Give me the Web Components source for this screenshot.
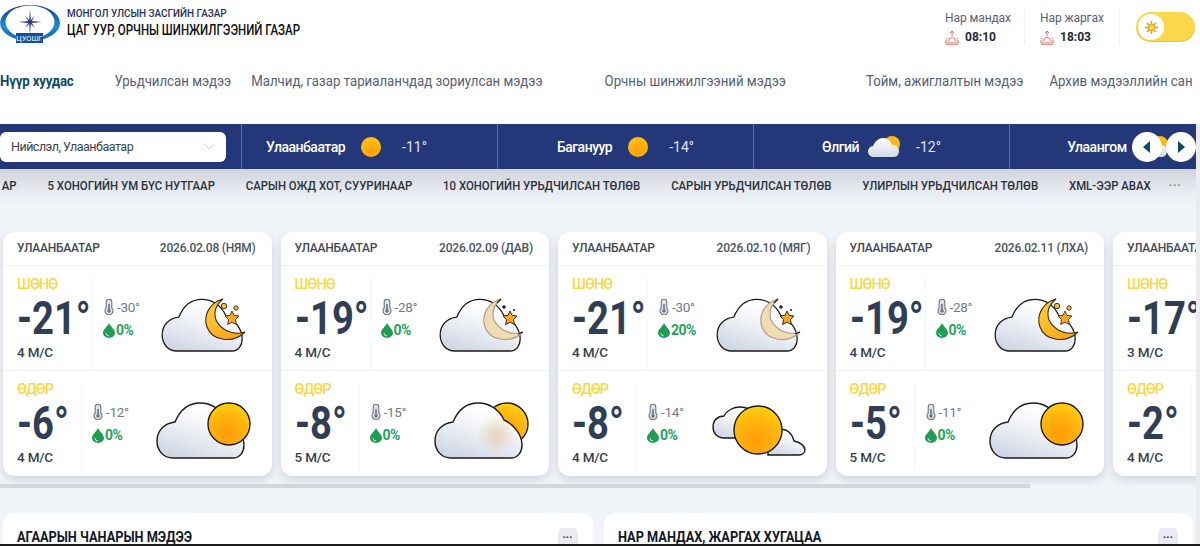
<!DOCTYPE html>
<html lang="mn">
<head>
<meta charset="utf-8">
<title>Цаг уур</title>
<style>
  html, body { margin: 0; height: 546px; overflow: hidden; background: #fff; }
  body { font-family: Roboto, "Liberation Sans", sans-serif; }
  wx-nav a { text-decoration: none; color: inherit; }
</style>
</head>
<body>
<wx-page>
  <wx-header></wx-header>
  <wx-nav>
    <a class="on">Нүүр хуудас</a>
    <a style="margin-left:43.400px">Урьдчилсан мэдээ</a>
    <a style="margin-left:21.200px">Малчид, газар тариаланчдад зориулсан мэдээ</a>
    <a style="margin-left:65.600px">Орчны шинжилгээний мэдээ</a>
    <a style="margin-left:84.700px">Тойм, ажиглалтын мэдээ</a>
    <a style="margin-left:27.500px">Архив мэдээллийн сан</a>
  </wx-nav>
  <wx-city-bar>
    <wx-city name="Улаанбаатар" temp="-11°" icon="sun" style="padding-right:46px"></wx-city>
    <wx-city name="Багануур" temp="-14°" icon="sun"></wx-city>
    <wx-city name="Өлгий" temp="-12°" icon="cloud"></wx-city>
    <wx-city name="Улаангом" temp="" icon="cloud"></wx-city>
  </wx-city-bar>
  <wx-subnav>
    <span>АР</span>
    <span>5 ХОНОГИЙН УМ БҮС НУТГААР</span>
    <span>САРЫН ОЖД ХОТ, СУУРИНААР</span>
    <span>10 ХОНОГИЙН УРЬДЧИЛСАН ТӨЛӨВ</span>
    <span>САРЫН УРЬДЧИЛСАН ТӨЛӨВ</span>
    <span>УЛИРЛЫН УРЬДЧИЛСАН ТӨЛӨВ</span>
    <span>XML-ЭЭР АВАХ</span>
  </wx-subnav>
  <wx-cards>
    <wx-day-card date="2026.02.08 (НЯМ)" n="-21°|-30°|0%|4 М/С|moon" d="-6°|-12°|0%|4 М/С|front"></wx-day-card>
    <wx-day-card date="2026.02.09 (ДАВ)" n="-19°|-28°|0%|4 М/С|moonfaint" d="-8°|-15°|0%|5 М/С|behind"></wx-day-card>
    <wx-day-card date="2026.02.10 (МЯГ)" n="-21°|-30°|20%|4 М/С|moonfaint" d="-8°|-14°|0%|4 М/С|big"></wx-day-card>
    <wx-day-card date="2026.02.11 (ЛХА)" n="-19°|-28°|0%|4 М/С|moon" d="-5°|-11°|0%|5 М/С|front"></wx-day-card>
    <wx-day-card n="-17°|||3 М/С|" d="-2°|||4 М/С|"></wx-day-card>
  </wx-cards>
  <wx-panels>
    <wx-panel>АГААРЫН ЧАНАРЫН МЭДЭЭ</wx-panel>
    <wx-panel>НАР МАНДАХ, ЖАРГАХ ХУГАЦАА</wx-panel>
  </wx-panels>
</wx-page>

<script>
// small helper so every element does the same thing
function shadow(el, html) {
  el.attachShadow({ mode: 'open' });
  el.shadowRoot.innerHTML = html;
}

const sunriseIcon = `
  <svg width="14" height="15" viewBox="0 0 14 15" fill="none" stroke="#d8706c" stroke-width="1">
    <path d="M7 6V1M5 3l2-2 2 2"/>
    <path d="M3.500 11a3.500 3.500 0 0 1 7 0"/>
    <path d="M1 8l1.500 1M13 8l-1.500 1M0 11h2.500M11.500 11H14"/>
    <path d="M0 12.800h14M1 14.400h12" stroke-width=".9"/>
  </svg>`;

class WxPage extends HTMLElement {
  constructor() {
    super();
    shadow(this, `
      <style>
        :host { display: block; position: relative; width: 1200px; height: 546px; overflow: hidden; background: #fff; }
        #main { width: 1196px; height: 546px; overflow: hidden; background: #fff; }
        #rail { position: absolute; right: 0; top: 124px; bottom: 0; width: 4px; background: #e9ebee; }
        #line { position: absolute; left: 0; right: 0; bottom: 0; height: 2px; background: #1c1c1c; }
      </style>
      <div id="main"><slot></slot></div>
      <div id="rail"></div>
      <div id="line"></div>
    `);
  }
}

class WxHeader extends HTMLElement {
  constructor() {
    super();
    shadow(this, `
      <style>
        :host { display: flex; height: 54px; width: 1200px; align-items: flex-start; box-sizing: border-box; color: #111; }
        #logo { width: 62px; height: 44px; margin-top: 2px; flex: none; }
        #titles { margin: 6px 0 0 5px; width: 300px; flex: none; }
        #titles div { transform-origin: 0 50%; white-space: nowrap; }
        #t1 { font-size: 11.500px; font-weight: 500; line-height: 14px; color: #27305c; transform: scaleX(.863); }
        #t2 { font-size: 14px; font-weight: 500; line-height: 18px; margin-top: 1px; color: #0d0d12; transform: scaleX(.82); }
        #right { margin-left: auto; display: flex; margin-top: 8px; margin-right: 5px; align-items: flex-start; }
        .sun { width: 80px; height: 37px; border-right: 1px solid #f0f1f3; box-sizing: border-box; }
        .sun + .sun { width: 95px; padding-left: 15px; }
        .lbl { font-size: 12px; line-height: 18px; color: #59626f; margin-top: 1px; letter-spacing: -.1px; }
        .val { display: flex; gap: 6px; align-items: center; font-size: 12px; font-weight: 700; color: #222a35; margin-top: 2px; height: 16px; }
        #toggle { width: 59px; height: 30px; margin: 4px 0 0 16px; border-radius: 15px; background: #fbd84b; position: relative; box-shadow: inset 0 -1px 1px #e5c02f; }
        #knob { position: absolute; left: 2px; top: 2px; width: 26px; height: 26px; border-radius: 50%; background: #fff; display: flex; align-items: center; justify-content: center; }
      </style>
      <svg id="logo" viewBox="0 0 62 44">
        <defs>
          <linearGradient id="lg" x1="0" y1="0" x2="0" y2="1">
            <stop offset="0" stop-color="#123a8c"/><stop offset=".6" stop-color="#1b8fd6"/><stop offset="1" stop-color="#0f5fb0"/>
          </linearGradient>
        </defs>
        <ellipse cx="30" cy="21" rx="30" ry="18" fill="url(#lg)"/>
        <ellipse cx="30" cy="20" rx="24.500" ry="16.500" fill="#fff"/>
        <path d="M30 7l.8 11 4-4-3 5 10 1-10 1 3 5-4-4-.8 11-.8-11-4 4 3-5-10-1 10-1-3-5 4 4z" fill="#2c3f8f"/>
        <rect x="16" y="31" width="27" height="10" fill="#134f9e"/>
        <text x="29.500" y="39" text-anchor="middle" font-size="7.500" font-family="Roboto" fill="#fff">ЦУОШГ</text>
      </svg>
      <div id="titles">
        <div id="t1">МОНГОЛ УЛСЫН ЗАСГИЙН ГАЗАР</div>
        <div id="t2">ЦАГ УУР, ОРЧНЫ ШИНЖИЛГЭЭНИЙ ГАЗАР</div>
      </div>
      <div id="right">
        <div class="sun"><div class="lbl">Нар мандах</div><div class="val">${sunriseIcon}08:10</div></div>
        <div class="sun"><div class="lbl">Нар жаргах</div><div class="val">${sunriseIcon}18:03</div></div>
        <div id="toggle"><div id="knob">
          <svg width="13" height="13" viewBox="0 0 13 13"><g stroke="#e2a10f" stroke-width="1.500"><path d="M6.500 0v13M0 6.500h13M2 2l9 9M11 2l-9 9"/></g><circle cx="6.500" cy="6.500" r="4" fill="#f0b31a"/><circle cx="6.500" cy="6.500" r="2" fill="#fde38a"/></svg>
        </div></div>
      </div>
    `);
  }
}

class WxNav extends HTMLElement {
  constructor() {
    super();
    shadow(this, `
      <style>
        :host { display: block; height: 70px; font-size: 14px; color: #556070; overflow: hidden; }
        #row { display: flex; padding-top: 18px; line-height: 18px; white-space: nowrap; width: 1270px; transform: scaleX(.945); transform-origin: 0 0; }
        ::slotted(.on) { color: #0f4a68 !important; font-weight: 700; letter-spacing: -.2px; }
      </style>
      <div id="row"><slot></slot></div>
    `);
  }
}

class WxCityBar extends HTMLElement {
  constructor() {
    super();
    shadow(this, `
      <style>
        :host { display: flex; position: relative; width: 1196px; height: 45px; background: #243879; overflow: hidden; }
        #pick { flex: none; width: 241px; display: flex; align-items: center; }
        #select { width: 226px; height: 30px; background: #fff; border-radius: 6px; display: flex; align-items: center; justify-content: space-between; box-sizing: border-box; padding: 0 11px; font-size: 12.500px; color: #3a4450; letter-spacing: -.5px; }
        #cells { display: flex; }
        .arrow { position: absolute; top: 8px; width: 30px; height: 30px; border-radius: 50%; background: #fff; display: flex; align-items: center; justify-content: center; }
      </style>
      <div id="pick"><div id="select">Нийслэл, Улаанбаатар
        <svg width="12" height="7" viewBox="0 0 12 7" fill="none" stroke="#cfd3da"><path d="M1 1l5 5 5-5"/></svg>
      </div></div>
      <div id="cells"><slot></slot></div>
      <div class="arrow" style="left:1132px"><svg width="10" height="12" viewBox="0 0 10 12"><path d="M8 0v12L1 6z" fill="#0e4a62"/></svg></div>
      <div class="arrow" style="left:1166px"><svg width="10" height="12" viewBox="0 0 10 12"><path d="M2 0v12l7-6z" fill="#0e4a62"/></svg></div>
    `);
  }
}

class WxCity extends HTMLElement {
  constructor() {
    super();
    const icon = this.getAttribute('icon') === 'sun'
      ? `<svg width="20" height="20" viewBox="0 0 20 20"><defs><radialGradient id="s" cx=".5" cy=".7" r=".7"><stop offset="0" stop-color="#ff9d0a"/><stop offset="1" stop-color="#fdc50f"/></radialGradient></defs><circle cx="10" cy="10" r="10" fill="url(#s)"/></svg>`
      : `<svg width="34" height="22" viewBox="0 0 34 22"><circle cx="24" cy="8" r="8" fill="#fbb91a"/><path d="M6 21a5.500 5.500 0 0 1-1-11C7 5 11 2 15 2c4 0 7 2 9 7 5 0 7 3 7 6 0 3-2 6-5 6z" fill="url(#c)"/><defs><linearGradient id="c" x1="0" y1="0" x2="0" y2="1"><stop offset="0" stop-color="#fff"/><stop offset="1" stop-color="#d3d9e6"/></linearGradient></defs></svg>`;
    shadow(this, `
      <style>
        :host { display: flex; flex: none; width: 256px; height: 45px; align-items: center; justify-content: center; border-left: 1px solid #5a6ca3; box-sizing: border-box; color: #fff; font-size: 14px; font-weight: 500; }
        #n { margin-right: 9px; letter-spacing: -.5px; }
        #i { width: 34px; margin-right: 14px; display: flex; justify-content: center; }
        #t { color: #dfe4f1; font-weight: 400; min-width: 24px; }
      </style>
      <span id="n">${this.getAttribute('name')}</span>
      <span id="i">${icon}</span>
      <span id="t">${this.getAttribute('temp')}</span>
    `);
  }
}

class WxSubnav extends HTMLElement {
  constructor() {
    super();
    shadow(this, `
      <style>
        :host { display: block; width: 1196px; height: 63px; box-sizing: border-box; background: linear-gradient(#cfd2da 0, #e6e9ef 20px, #f1f4f9 36px); font-size: 12.500px; font-weight: 500; color: #2a323d; overflow: hidden; }
        #row { display: flex; gap: 33.900px; padding: 9px 0 0 2px; line-height: 16px; white-space: nowrap; align-items: center; width: 1300px; transform: scaleX(.911); transform-origin: 0 0; }
        #more { color: #69727e; margin-left: -14px; letter-spacing: 1px; }
      </style>
      <div id="row"><slot></slot><span id="more">···</span></div>
    `);
  }
}

class WxCards extends HTMLElement {
  constructor() {
    super();
    shadow(this, `
      <style>
        :host { display: block; width: 1196px; height: 281px; background: #f1f4f9; overflow: hidden; position: relative; }
        #row { display: flex; gap: 9px; padding-left: 3px; }
        #track { position: absolute; left: 0; top: 252px; height: 4px; width: 1196px; }
        #thumb { width: 1030px; height: 4px; background: #d3d6da; }
      </style>
      <div id="row"><slot></slot></div>
      <div id="track"><div id="thumb"></div></div>
    `);
  }
}

// draws one weather picture; coordinates follow the reference crops
class WxIcon extends HTMLElement {
  constructor() {
    super();
    const kind = this.getAttribute('kind');
    const id = 'k' + kind;
    const cloud = 'M20 58C10 58 4 50 4 41 4 30 12 23 22 22 27 10 36 3 47 3 58 3 68 9 73 20 82 24 91 34 91 45 91 52 87 58 80 58Z';
    const crescent = 'M70 5C56 9 50 22 54 33 59 47 80 50 92 38 80 42 68 36 63 26 60 17 64 10 70 5Z';
    const defs = `<defs>
      <linearGradient id="${id}c" x1=".1" y1="1" x2=".55" y2=".1"><stop offset="0" stop-color="#cbd3e2"/><stop offset=".75" stop-color="#f6f7fa"/><stop offset="1" stop-color="#fff"/></linearGradient>
      <radialGradient id="${id}s" cx=".45" cy=".72" r=".75"><stop offset="0" stop-color="#ff9a0b"/><stop offset=".6" stop-color="#ffb60d"/><stop offset="1" stop-color="#ffd30f"/></radialGradient>
      <linearGradient id="${id}m" x1="0" y1="0" x2=".8" y2="1"><stop offset="0" stop-color="#ffd23a"/><stop offset="1" stop-color="#f9a21b"/></linearGradient>
      <radialGradient id="${id}g"><stop offset="0" stop-color="#d9a45f" stop-opacity=".4"/><stop offset="1" stop-color="#d9a45f" stop-opacity="0"/></radialGradient>
    </defs>`;
    const ink = 'stroke="#1d1a16" stroke-width="1.400"';
    const nightCloud = `<path transform="translate(5.500 2.500) scale(.92 .94)" d="${cloud}" fill="url(#${id}c)" ${ink}/>`;
    const star = (fill, s) => `<path d="M79 17l2 4.300 5 .7-3.500 3.500 .8 5-4.300-2.400-4.300 2.400 .8-5L72 22l5-.7z" fill="${fill}" stroke="${s}" stroke-width="1"/>`;
    let art = '';
    if (kind === 'moon') {
      art = nightCloud + `
        <circle cx="71" cy="12" r="2.700" fill="#f7c04a" stroke="#4a3410"/><circle cx="83" cy="14" r="2.200" fill="#f7c04a" stroke="#4a3410"/>
        ${star('#f9a825', '#5a3d10')}
        <path d="${crescent}" fill="url(#${id}m)" stroke="#3a2a10" stroke-width="1.100"/>`;
    } else if (kind === 'moonfaint') {
      art = nightCloud + `
        <circle cx="73" cy="13" r="1.800" fill="#222"/><circle cx="83" cy="16" r="1.100" fill="#222"/>
        ${star('#f9a825', '#3a2a10')}
        <path d="${crescent}" fill="#efdcb4" stroke="#ab9c80" stroke-width="1.100"/>
        <path d="M70 5l-4 4M92 38l-5 2" stroke="#1d1a16" stroke-width="1.200"/>`;
    } else if (kind === 'front') {
      art = `<path d="${cloud}" fill="url(#${id}c)" ${ink}/><circle cx="76" cy="24" r="21" fill="url(#${id}s)" ${ink}/>`;
    } else if (kind === 'behind') {
      art = `<circle cx="76" cy="24" r="21" fill="url(#${id}s)" ${ink}/><path d="${cloud}" fill="url(#${id}c)" ${ink}/><ellipse cx="66" cy="34" rx="20" ry="20" fill="url(#${id}g)"/>`;
    } else if (kind === 'big') {
      art = `<path d="M16 38C9 38 5 33 5 27 5 20 10 16 16 16 19 10 26 7 32 7 40 7 46 12 48 18V38Z" fill="url(#${id}c)" ${ink}/>
        <path d="M60 55V30H72C78 28 84 33 86 41 92 42 97 46 97 50 97 53 94 55 90 55Z" fill="url(#${id}c)" ${ink}/>
        <circle cx="50" cy="30" r="24" fill="url(#${id}s)" ${ink}/>`;
    }
    shadow(this, `
      <style>:host { display: block; width: 100px; height: 64px; } svg { display: block; overflow: visible; }</style>
      <svg width="100" height="64" viewBox="0 0 100 64">${defs}${art}</svg>
    `);
  }
}

const thermo = `<svg width="10" height="16" viewBox="0 0 10 16" fill="none"><path d="M2.200 3a2.800 2.800 0 0 1 5.600 0v6a4 4 0 1 1-5.600 0z" fill="#dfe2e8" stroke="#6f7783" stroke-width="1.100"/><path d="M5 5v6" stroke="#6f7783" stroke-width="1.600"/><circle cx="5" cy="12" r="1.800" fill="#6f7783"/></svg>`;
const drop = `<svg width="12" height="15" viewBox="0 0 12 15"><path d="M6 0C4 4 0 6.500 0 10a6 5 0 0 0 12 0C12 6.500 8 4 6 0z" fill="#1f9d55"/><path d="M3 10a3 3 0 0 0 3 3" fill="none" stroke="#cfeedd" stroke-width="1"/></svg>`;

class WxDayCard extends HTMLElement {
  constructor() {
    super();
    const part = (label, attr) => {
      const [temp, low, rain, wind, kind] = this.getAttribute(attr).split('|');
      const details = low ? `<div class="det">
            <div class="low">${thermo}<span>${low}</span></div>
            <div class="rain">${drop}<span>${rain}</span></div>
          </div>` : '';
      const icon = kind ? `<wx-icon class="ic" kind="${kind}"></wx-icon>` : '';
      // the column is narrower for one digit temperatures
      const w = temp.length > 3 ? 76 : 65;
      return `<section>
        <div class="main" style="width:${w}px">
          <div class="lab">${label}</div>
          <div class="temp">${temp}</div>
          <div class="wind">${wind}</div>
        </div>
        ${details}${icon}
      </section>`;
    };
    const date = this.getAttribute('date');
    shadow(this, `
      <style>
        :host { display: block; flex: none; width: 268.500px; height: 244px; background: #fff; border-radius: 12px; box-shadow: 0 4px 10px rgba(60,70,90,.18); overflow: hidden; color: #313f56; }
        header { height: 34px; display: flex; justify-content: space-between; align-items: center; padding: 0 16px 2px 14px; font-size: 12px; font-weight: 500; color: #3f4958; border-bottom: 1px solid #f0f1f4; box-sizing: border-box; white-space: nowrap; letter-spacing: -.25px; }
        header span + span { color: #4a5462; letter-spacing: -.2px; }
        section { height: 105px; position: relative; display: flex; padding-left: 14px; box-sizing: border-box; border-bottom: 1px solid #eff0f3; }
        section:last-child { border-bottom: 0; }
        .main { border-right: 1px solid #f6f7f9; flex: none; box-sizing: border-box; height: 92px; margin-top: 11px; white-space: nowrap; }
        .lab { font-size: 14.500px; font-weight: 500; color: #fbd748; line-height: 16px; letter-spacing: -.9px; }
        .temp { font-size: 46px; font-weight: 700; line-height: 44px; margin-top: 3px; color: #303e55; transform: scaleX(.83); transform-origin: 0 50%; }
        .wind { font-size: 13.500px; font-weight: 500; line-height: 16px; margin-top: 4px; color: #353f4e; letter-spacing: -.2px; }
        .det { margin: 33px 0 0 11px; flex: none; }
        .low { display: flex; align-items: center; gap: 3px; font-size: 13.500px; line-height: 16px; color: #737b87; letter-spacing: -.3px; }
        .rain { display: flex; align-items: center; gap: 1px; font-size: 14px; font-weight: 700; line-height: 16px; color: #23a35c; margin-top: 7px; margin-left: -1px; letter-spacing: -.5px; }
        .ic { position: absolute; left: 150px; top: 28px; }
        section:last-child .ic { top: 29px; }
      </style>
      <header><span>УЛААНБААТАР</span>${date ? `<span>${date}</span>` : ''}</header>
      ${part('ШӨНӨ', 'n')}
      ${part('ӨДӨР', 'd')}
    `);
  }
}

class WxPanels extends HTMLElement {
  constructor() {
    super();
    shadow(this, `
      <style>
        :host { display: flex; gap: 11px; width: 1196px; height: 33px; background: #f1f4f9; padding-left: 3px; box-sizing: border-box; overflow: hidden; }
      </style>
      <slot></slot>
    `);
  }
}

class WxPanel extends HTMLElement {
  constructor() {
    super();
    shadow(this, `
      <style>
        :host { display: flex; flex: none; width: 589.500px; height: 60px; background: #fff; border-radius: 12px 12px 0 0; box-sizing: border-box; padding: 15px 15px 0 14px; justify-content: space-between; font-size: 15px; font-weight: 700; color: #111827; }
        #t { line-height: 18px; white-space: nowrap; transform: scaleX(.85); transform-origin: 0 50%; }
        #b { width: 20px; height: 20px; border-radius: 5px; background: #e8ecf2; color: #333c48; font-size: 11px; font-weight: 700; text-align: center; line-height: 14px; letter-spacing: .2px; }
      </style>
      <div id="t"><slot></slot></div>
      <div id="b">...</div>
    `);
  }
}

customElements.define('wx-page', WxPage);
customElements.define('wx-header', WxHeader);
customElements.define('wx-nav', WxNav);
customElements.define('wx-city-bar', WxCityBar);
customElements.define('wx-city', WxCity);
customElements.define('wx-subnav', WxSubnav);
customElements.define('wx-cards', WxCards);
customElements.define('wx-icon', WxIcon);
customElements.define('wx-day-card', WxDayCard);
customElements.define('wx-panels', WxPanels);
customElements.define('wx-panel', WxPanel);
</script>
</body>
</html>
